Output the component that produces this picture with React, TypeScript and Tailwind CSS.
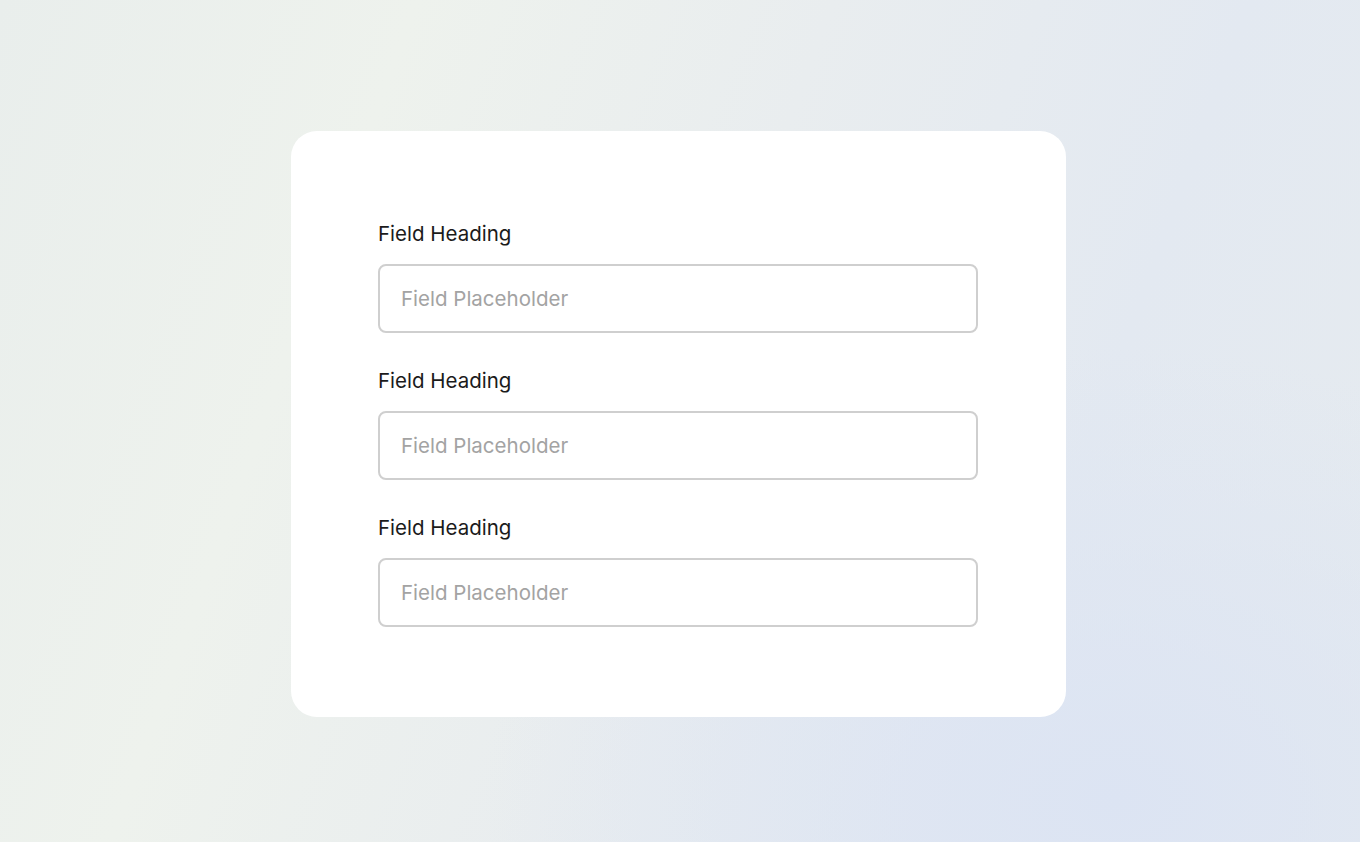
const fields = ["Field Heading", "Field Heading", "Field Heading"];

export default function App() {
  return (
    <div className="flex h-screen w-full items-center justify-center bg-[radial-gradient(ellipse_at_82%_95%,#dce4f3_0%,rgba(220,228,243,0)_40%),linear-gradient(110deg,#e9eeec_0%,#eef2ed_25%,#e9edef_50%,#e3e9f1_75%,#e6ebef_100%)] font-['Inter',sans-serif]">
      <div className="mr-[4px] mt-[6px] flex h-[586px] w-[775px] flex-col items-center justify-center rounded-[26px] bg-white">
        <div className="flex w-[600px] flex-col gap-[36px]">
          {fields.map((label, index) => (
            <label key={index} className="flex flex-col gap-[18px]">
              <span className="text-[20.5px] leading-[24px] text-[#1b1b1b]">
                {label}
              </span>
              <input
                type="text"
                placeholder="Field Placeholder"
                className="h-[69px] w-full rounded-[8px] border-2 border-[#cfcfcf] bg-white px-[21px] text-[20.5px] text-[#1b1b1b] outline-none placeholder:text-[#a3a3a3]"
              />
            </label>
          ))}
        </div>
      </div>
    </div>
  );
}
